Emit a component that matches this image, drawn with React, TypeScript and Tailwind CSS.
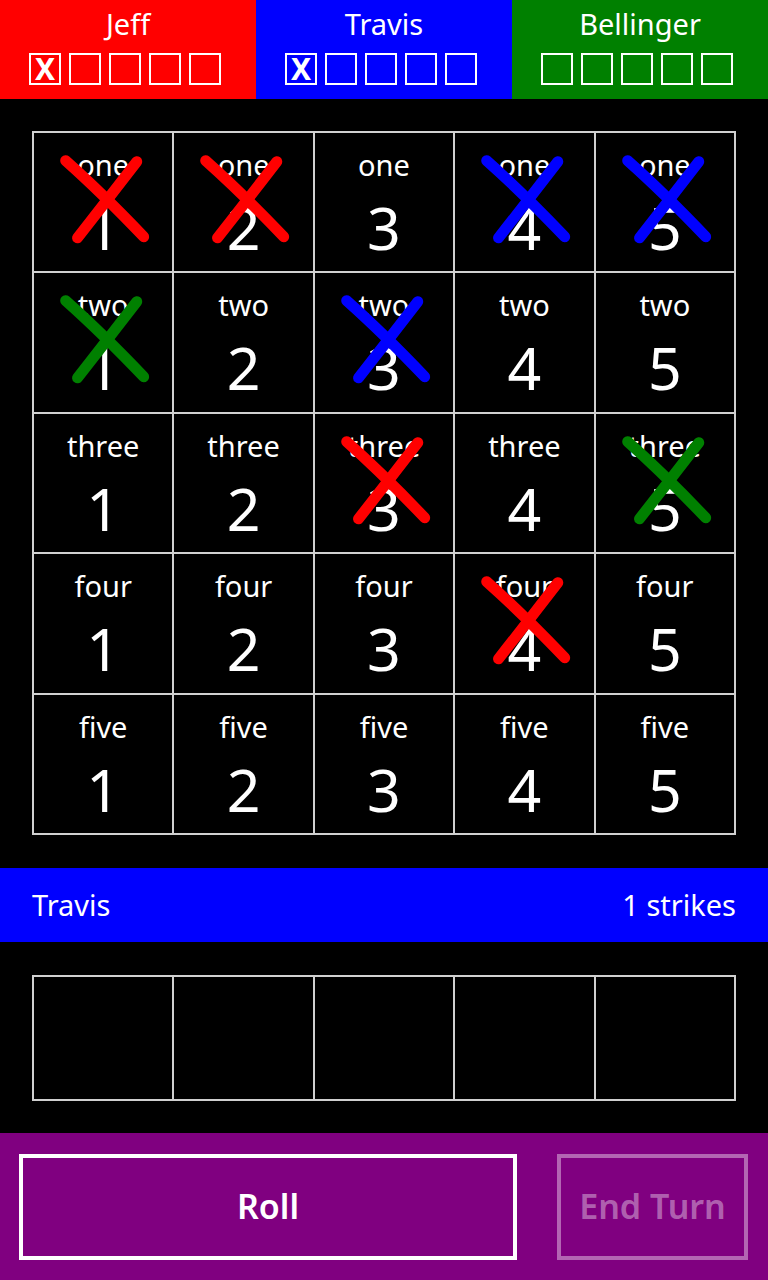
import React from 'react';

type Mark = 'red' | 'blue' | 'green' | null;

const players = [
  { name: 'Jeff', bg: 'bg-[#ff0000]', strikes: 1 },
  { name: 'Travis', bg: 'bg-[#0000ff]', strikes: 1 },
  { name: 'Bellinger', bg: 'bg-[#008000]', strikes: 0 },
];

const rows = ['one', 'two', 'three', 'four', 'five'];

// which cells have been crossed off, and by whom
const marks: Mark[][] = [
  ['red', 'red', null, 'blue', 'blue'],
  ['green', null, 'blue', null, null],
  [null, null, 'red', null, 'green'],
  [null, null, null, 'red', null],
  [null, null, null, null, null],
];

const markColor = { red: '#ff0000', blue: '#0000ff', green: '#008000' };

function Cross({ color }: { color: string }) {
  return (
    <svg className="absolute inset-0 w-full h-full pointer-events-none" viewBox="0 0 140 140">
      <path d="M32 28 Q68 60 111 105" stroke={color} strokeWidth="11" strokeLinecap="round" fill="none" />
      <path d="M104 29 Q74 68 44 106" stroke={color} strokeWidth="11" strokeLinecap="round" fill="none" />
    </svg>
  );
}

function StrikeBoxes({ count }: { count: number }) {
  return (
    <div className="flex gap-[8px]">
      {[0, 1, 2, 3, 4].map(i => (
        <div key={i} className="w-[32px] h-[32px] border-2 border-white flex items-center justify-center">
          {i < count && <span className="text-[30px] font-bold leading-none text-white">X</span>}
        </div>
      ))}
    </div>
  );
}

export default function App() {
  return (
    <div className="w-[768px] h-[1280px] bg-black text-white flex flex-col" style={{ fontFamily: '"Noto Sans", "Open Sans", sans-serif' }}>
      {/* Players */}
      <div className="grid grid-cols-3 h-[99px]">
        {players.map(p => (
          <div key={p.name} className={`${p.bg} flex flex-col items-center pt-[3px]`}>
            <div className="text-[29px] leading-[42px]">{p.name}</div>
            <div className="mt-[8px] -ml-[6px]">
              <StrikeBoxes count={p.strikes} />
            </div>
          </div>
        ))}
      </div>

      {/* Board */}
      <div className="mx-[32px] mt-[32px] border border-[#d0d0d0] grid grid-cols-5">
        {rows.map((label, r) =>
          [1, 2, 3, 4, 5].map((n, c) => {
            const m = marks[r][c];
            return (
              <div key={label + n} className="relative h-[140.4px] border border-[#d0d0d0] flex flex-col items-center">
                <div className="text-[29px] leading-none mt-[17px]">{label}</div>
                <div className="text-[59px] leading-none mt-[19px]">{n}</div>
                {m && <Cross color={markColor[m]} />}
              </div>
            );
          })
        )}
      </div>

      {/* Current player */}
      <div className="mt-[33px] h-[74px] bg-[#0000ff] flex items-center justify-between px-[32px] text-[29px]">
        <span>Travis</span>
        <span>1 strikes</span>
      </div>

      {/* Dice */}
      <div className="mx-[32px] mt-[33px] h-[126px] border border-[#d0d0d0] grid grid-cols-5">
        {[0, 1, 2, 3, 4].map(i => (
          <div key={i} className="border border-[#d0d0d0]" />
        ))}
      </div>

      {/* Actions */}
      <div className="mt-auto h-[147px] bg-[#800080] flex items-center gap-[40px] pl-[19px] pr-[20px]">
        <button className="w-[498px] h-[106px] border-[4px] border-white text-[34px] font-semibold text-white">Roll</button>
        <button className="flex-1 h-[106px] border-[4px] border-white/40 text-[34px] font-semibold text-white/40">End Turn</button>
      </div>
    </div>
  );
}
